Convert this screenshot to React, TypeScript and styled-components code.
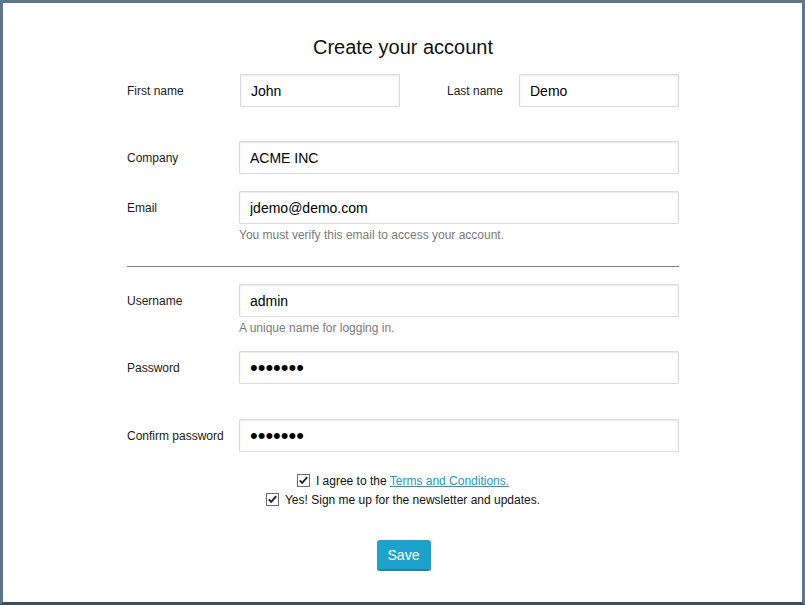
import React from "react";
import styled, { createGlobalStyle } from "styled-components";

const Global = createGlobalStyle`
  html, body { margin: 0; padding: 0; background: #fff; }
  body { font-family: "Liberation Sans", Arial, sans-serif; }
  * { box-sizing: border-box; }
`;

const Frame = styled.div`
  width: 805px;
  height: 605px;
  border: 3px solid #5d768c;
  border-bottom-color: #3e4c57;
  background: #fff;
  padding-top: 32px;
`;

const Form = styled.form`
  width: 552px;
  margin-left: 124px;
  display: flex;
  flex-direction: column;
`;

const Title = styled.h1`
  margin: 0 0 15px;
  font-size: 20px;
  line-height: 24px;
  font-weight: normal;
  color: #111;
  text-align: center;
`;

const Row = styled.div<{ $mb?: number }>`
  display: flex;
  align-items: flex-start;
  margin-bottom: ${(p) => p.$mb ?? 0}px;
`;

const Label = styled.label<{ $w: number }>`
  width: ${(p) => p.$w}px;
  flex: none;
  height: 33px;
  display: flex;
  align-items: center;
  font-size: 12px;
  color: #1a1a1a;
`;

const Control = styled.div<{ $w?: number }>`
  display: flex;
  flex-direction: column;
  width: ${(p) => (p.$w ? `${p.$w}px` : "auto")};
  flex: ${(p) => (p.$w ? "none" : "1")};
`;

const Input = styled.input<{ $secret?: boolean }>`
  width: 100%;
  height: 33px;
  border: 1px solid #dadada;
  border-radius: 1px;
  box-shadow: inset 0 1px 2px rgba(0, 0, 0, 0.09);
  padding: 0 10px;
  font-family: "Liberation Sans", Arial, sans-serif;
  font-size: ${(p) => (p.$secret ? "22px" : "14px")};
  color: #000;
  background: #fff;
  outline: none;
`;

const Spacer = styled.div<{ $w: number }>`
  width: ${(p) => p.$w}px;
  flex: none;
`;

const Help = styled.div`
  margin-top: 3px;
  font-size: 12px;
  line-height: 16px;
  color: #7a7a7a;
`;

const Divider = styled.hr`
  margin: 23px 0 17px;
  border: none;
  border-top: 1px solid #7d7d7d;
  height: 0;
  width: 552px;
`;

const Checks = styled.div`
  margin-top: 19px;
  display: flex;
  flex-direction: column;
  align-items: center;
`;

const CheckLine = styled.label`
  display: flex;
  align-items: center;
  gap: 6px;
  height: 19px;
  font-size: 12px;
  color: #111;
`;

const Box = styled.svg`
  width: 13px;
  height: 13px;
  flex: none;
`;

const Link = styled.a`
  color: #1a9ac6;
  text-decoration: underline;
`;

const Actions = styled.div`
  display: flex;
  justify-content: center;
  margin-top: 31px;
`;

const SaveButton = styled.button`
  width: 54px;
  height: 31px;
  margin-left: 1px;
  border: none;
  border-bottom: 2px solid #1786ab;
  border-radius: 3px;
  background: #1ea2cc;
  color: #fff;
  font-family: "Liberation Sans", Arial, sans-serif;
  font-size: 14px;
  padding: 0;
`;

const Check = () => (
  <Box viewBox="0 0 13 13">
    <rect x="0.5" y="0.5" width="12" height="12" fill="#fff" stroke="#6b6b6b" />
    <path d="M2.8 6.4 L5.2 8.9 L10.2 3.2" fill="none" stroke="#222" strokeWidth="1.9" />
  </Box>
);

export default function App() {
  return (
    <>
      <Global />
      <Frame>
        <Form onSubmit={(e) => e.preventDefault()}>
          <Title>Create your account</Title>
          <Row $mb={34}>
            <Label $w={113}>First name</Label>
            <Control $w={160}>
              <Input defaultValue="John" />
            </Control>
            <Spacer $w={47} />
            <Label $w={72}>Last name</Label>
            <Control $w={160}>
              <Input defaultValue="Demo" />
            </Control>
          </Row>
          <Row $mb={17}>
            <Label $w={112}>Company</Label>
            <Control>
              <Input defaultValue="ACME INC" />
            </Control>
          </Row>
          <Row>
            <Label $w={112}>Email</Label>
            <Control>
              <Input defaultValue="jdemo@demo.com" />
              <Help>You must verify this email to access your account.</Help>
            </Control>
          </Row>
          <Divider />
          <Row $mb={15}>
            <Label $w={112}>Username</Label>
            <Control>
              <Input defaultValue="admin" />
              <Help>A unique name for logging in.</Help>
            </Control>
          </Row>
          <Row $mb={35}>
            <Label $w={112}>Password</Label>
            <Control>
              <Input $secret type="password" defaultValue="demodem" />
            </Control>
          </Row>
          <Row>
            <Label $w={112}>Confirm password</Label>
            <Control>
              <Input $secret type="password" defaultValue="demodem" />
            </Control>
          </Row>
          <Checks>
            <CheckLine>
              <Check />
              <span>
                I agree to the <Link href="#">Terms and Conditions.</Link>
              </span>
            </CheckLine>
            <CheckLine>
              <Check />
              <span>Yes! Sign me up for the newsletter and updates.</span>
            </CheckLine>
          </Checks>
          <Actions>
            <SaveButton type="submit">Save</SaveButton>
          </Actions>
        </Form>
      </Frame>
    </>
  );
}
